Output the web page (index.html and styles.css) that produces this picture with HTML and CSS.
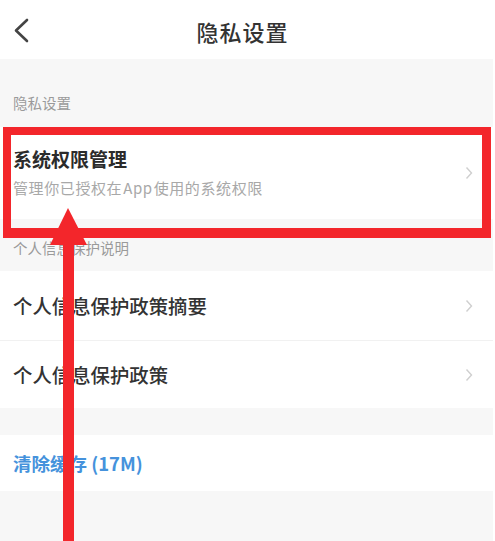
FILE: index.html
```html
<!DOCTYPE html>
<html lang="zh-CN">
<head>
<meta charset="utf-8">
<title>隐私设置</title>
<link rel="stylesheet" href="styles.css">
</head>
<body>
<div class="page">
  <header class="nav">
    <svg class="back" width="20" height="26" viewBox="0 0 20 26"><polyline points="14,2 3,12.5 14,23" fill="none" stroke="#444" stroke-width="2.6" stroke-linecap="round" stroke-linejoin="round"/></svg>
    <h1 class="title">隐私设置</h1>
  </header>
  <div class="label label-first">隐私设置</div>
  <div class="card">
    <div class="card-text">
      <div class="card-title">系统权限管理</div>
      <div class="card-sub">管理你已授权在 App 使用的系统权限</div>
    </div>
    <svg class="chev" width="8" height="14" viewBox="0 0 8 14"><polyline points="1.5,1.5 6.5,7 1.5,12.5" fill="none" stroke="#cfcfcf" stroke-width="1.4"/></svg>
  </div>
  <div class="label label-second">个人信息保护说明</div>
  <div class="group">
    <div class="row">
      <span class="row-text">个人信息保护政策摘要</span>
      <svg class="chev" width="8" height="14" viewBox="0 0 8 14"><polyline points="1.5,1.5 6.5,7 1.5,12.5" fill="none" stroke="#cfcfcf" stroke-width="1.4"/></svg>
    </div>
    <div class="row">
      <span class="row-text">个人信息保护政策</span>
      <svg class="chev" width="8" height="14" viewBox="0 0 8 14"><polyline points="1.5,1.5 6.5,7 1.5,12.5" fill="none" stroke="#cfcfcf" stroke-width="1.4"/></svg>
    </div>
  </div>
  <div class="group cache-group">
    <div class="row cache-row">
      <span class="cache-text">清除缓存 (17M)</span>
    </div>
  </div>
  <div class="highlight"></div>
  <svg class="arrow" width="44" height="336" viewBox="48 205 44 336"><polygon points="68,208 50,245 87,245" fill="#f3262b"/><rect x="63" y="240" width="11" height="301" fill="#f3262b"/></svg>
</div>
</body>
</html>
```

FILE: styles.css
```css
html, body {
  margin: 0;
  padding: 0;
  background: #ffffff;
}
body {
  font-family: "Noto Sans CJK SC", "Noto Sans", sans-serif;
}
.page {
  position: relative;
  width: 493px;
  height: 541px;
  background: #f7f7f7;
  overflow: hidden;
}
.nav {
  height: 59px;
  background: #ffffff;
  display: flex;
  align-items: center;
  justify-content: center;
  position: relative;
  padding-right: 8px;
}
.back {
  position: absolute;
  left: 13px;
  top: 18px;
}
.title {
  margin: 0;
  font-size: 22px;
  font-weight: 500;
  color: #333333;
  line-height: 30px;
  letter-spacing: 1px;
  margin-top: 2px;
}
.label {
  font-size: 14.5px;
  color: #9a9a9a;
  line-height: 22px;
  padding-left: 13px;
}
.label-first {
  padding-top: 33px;
  padding-bottom: 13px;
}
.label-second {
  padding-top: 18px;
  padding-bottom: 12px;
}
.card {
  background: #ffffff;
  height: 92px;
  box-sizing: border-box;
  display: flex;
  align-items: center;
  justify-content: space-between;
  padding: 0 20px 0 13px;
}
.card-text {
  display: flex;
  flex-direction: column;
  gap: 5px;
  margin-top: -1px;
}
.card-title {
  font-size: 19px;
  font-weight: 700;
  color: #2b2b2b;
  line-height: 26px;
}
.card-sub {
  font-size: 15px;
  color: #a8a8a8;
  line-height: 22px;
  letter-spacing: 0.6px;
  word-spacing: -3px;
}
.group {
  background: #ffffff;
}
.row {
  height: 69px;
  display: flex;
  align-items: center;
  justify-content: space-between;
  padding: 0 20px 0 13px;
  border-bottom: 1px solid #f1f1f1;
}
.row:last-child {
  border-bottom: none;
  height: 67px;
}
.row-text {
  font-size: 19.4px;
  color: #333333;
  font-weight: 500;
}
.cache-group {
  margin-top: 27px;
}
.cache-row {
  height: 56px;
}
.row.cache-row:last-child {
  height: 56px;
}
.cache-text {
  font-size: 18.5px;
  font-weight: 700;
  color: #4592dc;
}
.highlight {
  position: absolute;
  left: 3px;
  top: 127px;
  width: 488px;
  height: 111px;
  box-sizing: border-box;
  border: 8px solid #f3262b;
  border-right-width: 9px;
  border-bottom-width: 10px;
}
.arrow {
  position: absolute;
  left: 48px;
  top: 205px;
}
```
